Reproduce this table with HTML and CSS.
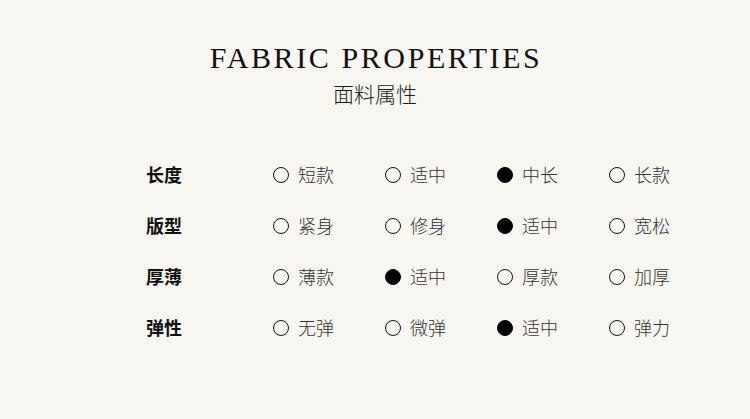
FILE: index.html
```html
<!DOCTYPE html>
<html lang="zh">
<head>
<meta charset="utf-8">
<link rel="stylesheet" href="styles.css">
</head>
<body>
<div class="page">
  <header class="head">
    <h1 class="title">FABRIC PROPERTIES</h1>
    <h2 class="subtitle">面料属性</h2>
  </header>
  <div class="table">
    <div class="row">
      <div class="label">长度</div>
      <div class="opt"><span class="dot"></span><span class="txt">短款</span></div>
      <div class="opt"><span class="dot"></span><span class="txt">适中</span></div>
      <div class="opt"><span class="dot on"></span><span class="txt">中长</span></div>
      <div class="opt"><span class="dot"></span><span class="txt">长款</span></div>
    </div>
    <div class="row">
      <div class="label">版型</div>
      <div class="opt"><span class="dot"></span><span class="txt">紧身</span></div>
      <div class="opt"><span class="dot"></span><span class="txt">修身</span></div>
      <div class="opt"><span class="dot on"></span><span class="txt">适中</span></div>
      <div class="opt"><span class="dot"></span><span class="txt">宽松</span></div>
    </div>
    <div class="row">
      <div class="label">厚薄</div>
      <div class="opt"><span class="dot"></span><span class="txt">薄款</span></div>
      <div class="opt"><span class="dot on"></span><span class="txt">适中</span></div>
      <div class="opt"><span class="dot"></span><span class="txt">厚款</span></div>
      <div class="opt"><span class="dot"></span><span class="txt">加厚</span></div>
    </div>
    <div class="row">
      <div class="label">弹性</div>
      <div class="opt"><span class="dot"></span><span class="txt">无弹</span></div>
      <div class="opt"><span class="dot"></span><span class="txt">微弹</span></div>
      <div class="opt"><span class="dot on"></span><span class="txt">适中</span></div>
      <div class="opt"><span class="dot"></span><span class="txt">弹力</span></div>
    </div>
  </div>
</div>
</body>
</html>
```
FILE: styles.css
```css
html, body {
  margin: 0;
  padding: 0;
  background: #f8f6f1;
}
.page {
  width: 750px;
  height: 419px;
  box-sizing: border-box;
  padding-top: 43px;
  color: #111;
}
.head {
  text-align: center;
}
.title {
  margin: 0;
  padding-left: 2px;
  font-family: "Liberation Serif", "DejaVu Serif", serif;
  font-weight: 400;
  font-size: 30px;
  line-height: 30px;
  letter-spacing: 2.6px;
  color: #111;
}
.subtitle {
  margin: 8px 0 0;
  font-family: "Noto Sans CJK SC", sans-serif;
  font-weight: 300;
  font-size: 21px;
  line-height: 24px;
  color: #1a1a1a;
}
.table {
  margin-top: 43px;
  padding-left: 146px;
}
.row {
  display: flex;
  align-items: center;
  height: 51px;
}
.label {
  width: 127px;
  font-family: "Noto Sans CJK SC", sans-serif;
  font-weight: 700;
  font-size: 18px;
  color: #111;
}
.opt {
  width: 112px;
  display: flex;
  align-items: center;
  gap: 9px;
}
.dot {
  width: 14px;
  height: 14px;
  margin-top: 2px;
  border: 1.3px solid #111;
  border-radius: 50%;
  box-sizing: content-box;
}
.dot.on {
  background: #000;
  border-color: #000;
}
.txt {
  font-family: "Noto Sans CJK SC", sans-serif;
  font-weight: 300;
  font-size: 18px;
  color: #333;
}
```
